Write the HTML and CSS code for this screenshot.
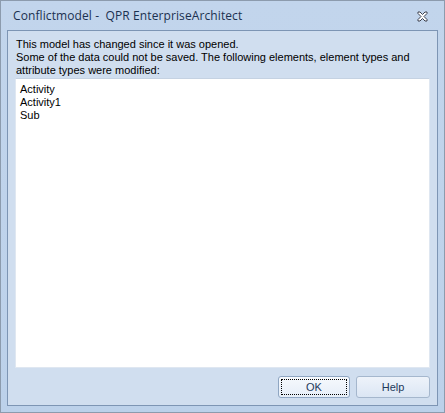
FILE: index.html
```html
<!DOCTYPE html>
<html>
<head>
<meta charset="utf-8">
<link rel="stylesheet" href="styles.css">
</head>
<body>
<div class="window">
  <div class="titlebar">
    <span class="title">Conflictmodel -&nbsp; QPR EnterpriseArchitect</span>
    <svg class="close" width="13" height="11" viewBox="0 0 13 11">
      <path d="M2 1 h2 l2.5 2.5 l2.5 -2.5 h2 v1.5 l-3 3 l3 3 v1.5 h-2 l-2.5 -2.5 l-2.5 2.5 h-2 v-1.5 l3 -3 l-3 -3 z" fill="#ffffff" stroke="#3a3f4c" stroke-width="1"/>
    </svg>
  </div>
  <div class="client">
    <p class="message">This model has changed since it was opened.<br>Some of the data could not be saved. The following elements, element types and attribute types were modified:</p>
    <div class="list">
      <div>Activity</div>
      <div>Activity1</div>
      <div>Sub</div>
    </div>
    <div class="buttons">
      <button class="btn default"><span class="focus">OK</span></button>
      <button class="btn">Help</button>
    </div>
  </div>
</div>
</body>
</html>
```
FILE: styles.css
```css
html, body {
  margin: 0;
  padding: 0;
  width: 445px;
  height: 413px;
  overflow: hidden;
}

.window {
  box-sizing: border-box;
  width: 445px;
  height: 413px;
  border: 1px solid #8c9bad;
  background: linear-gradient(#c2d5ec, #bcd1ea);
  padding: 0 6px 6px 6px;
  display: flex;
  flex-direction: column;
  font-family: "Liberation Sans", Arial, sans-serif;
}

.titlebar {
  height: 29px;
  flex: none;
  display: flex;
  align-items: center;
  justify-content: space-between;
  padding: 0 9px 0 6px;
}

.title {
  font-family: "Open Sans", sans-serif;
  font-size: 12px;
  letter-spacing: 0.1px;
  color: #1b3150;
}

.close {
  display: block;
  margin-top: 2px;
}

.client {
  flex: 1;
  border: 1px solid #7d95b4;
  background: #d0deef;
  padding: 7px 7px 7px 7px;
  display: flex;
  flex-direction: column;
}

.message {
  margin: 0 0 1px 1px;
  font-size: 11px;
  line-height: 13px;
  color: #000;
}

.list {
  flex: 1;
  background: #fff;
  border: 1px solid #dfe7f1;
  border-top-color: #c5d2e2;
  padding: 4px 4px 2px;
  font-size: 11px;
  line-height: 13px;
  color: #000;
}

.buttons {
  display: flex;
  justify-content: flex-end;
  gap: 6px;
  padding-top: 8px;
}

.btn {
  box-sizing: border-box;
  width: 74px;
  height: 22px;
  border: 1px solid #a5b7cd;
  border-radius: 3px;
  background: linear-gradient(#eef3fa, #dbe6f4);
  font-family: "Liberation Sans", Arial, sans-serif;
  font-size: 11px;
  color: #1e395b;
  padding: 0;
}

.btn.default {
  width: 72px;
  border-color: #8fa6c2;
  background: linear-gradient(#f6f9fd, #e6eef8);
  padding: 2px;
}

.focus {
  display: flex;
  align-items: center;
  justify-content: center;
  height: 100%;
  border: 1px dotted #000;
  box-sizing: border-box;
}
```
